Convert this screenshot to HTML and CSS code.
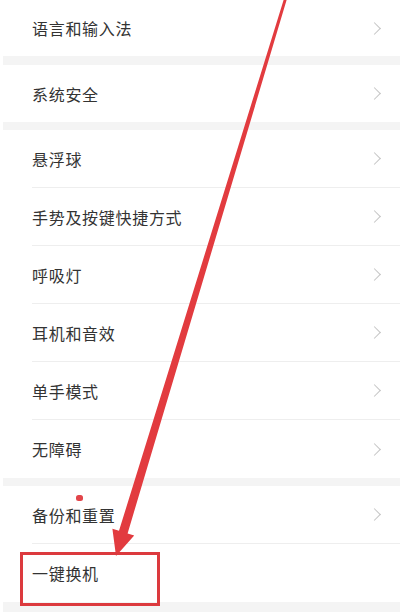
FILE: index.html
```html
<!DOCTYPE html>
<html lang="zh-CN">
<head>
    <meta charset="UTF-8">
    <meta name="viewport" content="width=device-width, initial-scale=1.0">
    <title>更多设置</title>
    <link rel="stylesheet" href="styles.css">
</head>
<body>

    <div class="page">

        <!-- 语言 -->
        <div class="group">
            <div class="row first"><span>语言和输入法</span><i class="chev"></i></div>
        </div>

        <!-- 安全 -->
        <div class="group">
            <div class="row short"><span>系统安全</span><i class="chev"></i></div>
        </div>

        <!-- 操作相关 -->
        <div class="group">
            <div class="row"><span>悬浮球</span><i class="chev"></i></div>
            <div class="row"><span>手势及按键快捷方式</span><i class="chev"></i></div>
            <div class="row"><span>呼吸灯</span><i class="chev"></i></div>
            <div class="row"><span>耳机和音效</span><i class="chev"></i></div>
            <div class="row"><span>单手模式</span><i class="chev"></i></div>
            <div class="row"><span>无障碍</span><i class="chev"></i></div>
        </div>

        <!-- 备份 -->
        <div class="group">
            <div class="row"><span>备份和重置</span><i class="chev"></i></div>
            <div class="row"><span>一键换机</span></div>
        </div>

    </div>

    <!-- annotation drawn over the screenshot -->
    <svg class="markup" width="404" height="612" viewBox="0 0 404 612">
        <polygon points="283.6,0 286.6,0 127.6,533.4 134.2,535.5 116,556 112.4,528.7 119,530.8" fill="#e23b3f"/>
        <rect x="21.5" y="553.5" width="137" height="51" fill="none" stroke="#dc3a3e" stroke-width="3"/>
        <rect x="76" y="495" width="7" height="6" rx="2.5" fill="#e2454a"/>
    </svg>

</body>
</html>
```

FILE: styles.css
```css
body {
    margin: 0;
    padding: 0;
    background-color: #ffffff;
    font-family: "Noto Sans CJK SC", "Noto Sans", sans-serif;
    overflow: hidden;
}

.page {
    width: 397px;
    height: 612px;
    margin-left: 3px;
    background-color: #f4f4f4;
    overflow: hidden;
}

.group {
    background-color: #ffffff;
    margin-bottom: 8px;
}

.group:first-child {
    margin-bottom: 9px;
}

.row {
    height: 58px;
    margin-left: 29px;
    display: flex;
    align-items: center;
    justify-content: space-between;
    border-bottom: 1px solid #eeeeee;
    box-sizing: border-box;
    font-size: 16px;
    letter-spacing: 0.7px;
    color: #333333;
}

.row:last-child {
    border-bottom: none;
}

.row.first {
    height: 56px;
}

.row.short {
    height: 57px;
}

/* chevron on the right */
.chev {
    width: 8px;
    height: 8px;
    margin-right: 21px;
    border-top: 1.3px solid #c4c4c4;
    border-right: 1.3px solid #c4c4c4;
    transform: rotate(45deg);
}

.markup {
    position: absolute;
    top: 0;
    left: 0;
    pointer-events: none;
}
```
